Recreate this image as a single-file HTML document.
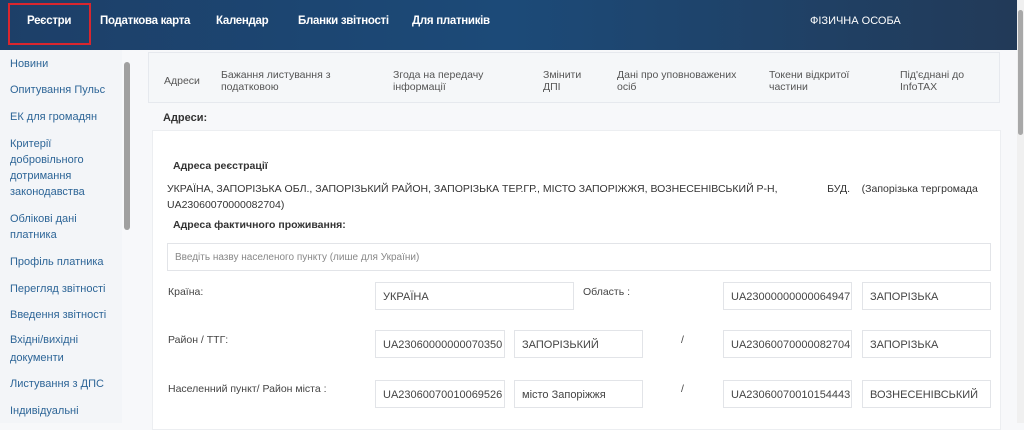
<!DOCTYPE html>
<html><head><meta charset="utf-8"><style>
*{margin:0;padding:0;box-sizing:border-box}
body{width:1024px;height:423px;overflow:hidden;background:#f7f8fa;font-family:"Liberation Sans","Noto Sans CJK SC",sans-serif;position:relative;font-size:11px;color:#333}
.a{position:absolute;white-space:nowrap}
.hdr{position:absolute;left:0;top:0;width:1017px;height:50px;background:linear-gradient(90deg,#1d3f68,#1c4a78 50%,#223a58)}
.nav{color:#fff;font-weight:bold;font-size:11.5px;top:15px;letter-spacing:-0.3px}
.side{position:absolute;left:0;top:50px;width:122px;height:373px;background:#f3f5f8}
.sl{color:#2d6597;font-size:11px;line-height:18px;left:10px}
.tabs{position:absolute;left:148px;top:52px;width:852px;height:51px;background:#f5f7f9;border:1px solid #e6e9ee}
.t{color:#555;font-size:10.5px;line-height:12px;top:17px}
.card{position:absolute;left:152px;top:130px;width:849px;height:300px;background:#fff;border:1px solid #eceef1}
.in{position:absolute;height:28px;border:1px solid #e2e4e8;background:#fff;color:#444;font-size:11px;padding:8px 0 0 7px;white-space:nowrap}
.lb{color:#444;font-size:10.5px}
</style></head><body>
<div class="hdr"></div>
<div class="a" style="left:8px;top:3px;width:83px;height:42px;border:2px solid #d9262e"></div>
<div class="a nav" style="left:27px">Реєстри</div>
<div class="a nav" style="left:100px">Податкова карта</div>
<div class="a nav" style="left:216px">Календар</div>
<div class="a nav" style="left:298px">Бланки звітності</div>
<div class="a nav" style="left:412px">Для платників</div>
<div class="a" style="left:810px;top:15px;color:#fff;font-size:11px">ФІЗИЧНА ОСОБА</div>
<div class="a" style="left:1017px;top:0;width:7px;height:423px;background:#f0f0f0"></div>
<div class="a" style="left:1018px;top:10px;width:5px;height:125px;background:#a8a8a8;border-radius:3px"></div>
<div class="side"></div>
<div class="a" style="left:124px;top:62px;width:6px;height:168px;background:#a0a0a0;border-radius:3px"></div>
<div class="a sl" style="top:55px">Новини</div>
<div class="a sl" style="top:81px">Опитування Пульс</div>
<div class="a sl" style="top:108px">ЕК для громадян</div>
<div class="a sl" style="top:136px;line-height:16px">Критерії<br>добровільного<br>дотримання<br>законодавства</div>
<div class="a sl" style="top:211px;line-height:16px">Облікові дані<br>платника</div>
<div class="a sl" style="top:253px">Профіль платника</div>
<div class="a sl" style="top:280px">Перегляд звітності</div>
<div class="a sl" style="top:306px">Введення звітності</div>
<div class="a sl" style="top:331px">Вхідні/вихідні<br>документи</div>
<div class="a sl" style="top:375px">Листування з ДПС</div>
<div class="a sl" style="top:402px">Індивідуальні</div>
<div class="tabs"></div>
<div class="a t" style="left:164px;top:75px">Адреси</div>
<div class="a t" style="left:221px;top:69px">Бажання листування з<br>податковою</div>
<div class="a t" style="left:393px;top:69px">Згода на передачу<br>інформації</div>
<div class="a t" style="left:543px;top:69px">Змінити<br>ДПІ</div>
<div class="a t" style="left:617px;top:69px">Дані про уповноважених<br>осіб</div>
<div class="a t" style="left:769px;top:69px">Токени відкритої<br>частини</div>
<div class="a t" style="left:900px;top:69px">Під'єднані до<br>InfoTAX</div>
<div class="a" style="left:163px;top:112px;font-weight:bold;font-size:11px;color:#333">Адреси:</div>
<div class="card"></div>
<div class="a" style="left:173px;top:160px;font-weight:bold;font-size:10.5px">Адреса реєстрації</div>
<div class="a" style="left:167px;top:181px;font-size:10.5px;line-height:16px;color:#333">УКРАЇНА, ЗАПОРІЗЬКА ОБЛ., ЗАПОРІЗЬКИЙ РАЙОН, ЗАПОРІЗЬКА ТЕР.ГР., МІСТО ЗАПОРІЖЖЯ, ВОЗНЕСЕНІВСЬКИЙ Р-Н, &nbsp; &nbsp; &nbsp; &nbsp; &nbsp; &nbsp; &nbsp; &nbsp; БУД. &nbsp; &nbsp;(Запорізька тергромада<br>UA23060070000082704)</div>
<div class="a" style="left:173px;top:219px;font-weight:bold;font-size:10.5px">Адреса фактичного проживання:</div>
<div class="in" style="left:167px;top:243px;width:824px;height:28px;color:#888;font-size:10px">Введіть назву населеного пункту (лише для України)</div>
<div class="a lb" style="left:168px;top:286px">Країна:</div>
<div class="a lb" style="left:583px;top:286px">Область :</div>
<div class="a lb" style="left:168px;top:334px">Район / ТТГ:</div>
<div class="a lb" style="left:168px;top:383px">Населенний пункт/ Район міста :</div>
<div class="a lb" style="left:681px;top:334px">/</div>
<div class="a lb" style="left:681px;top:383px">/</div>
<div class="in" style="left:375px;top:282px;width:199px">УКРАЇНА</div>
<div class="in" style="left:723px;top:282px;width:129px">UA23000000000064947</div>
<div class="in" style="left:862px;top:282px;width:129px">ЗАПОРІЗЬКА</div>
<div class="in" style="left:375px;top:330px;width:130px">UA23060000000070350</div>
<div class="in" style="left:514px;top:330px;width:129px">ЗАПОРІЗЬКИЙ</div>
<div class="in" style="left:723px;top:330px;width:129px">UA23060070000082704</div>
<div class="in" style="left:862px;top:330px;width:129px">ЗАПОРІЗЬКА</div>
<div class="in" style="left:375px;top:380px;width:130px">UA23060070010069526</div>
<div class="in" style="left:514px;top:380px;width:129px">місто Запоріжжя</div>
<div class="in" style="left:723px;top:380px;width:129px">UA23060070010154443</div>
<div class="in" style="left:862px;top:380px;width:129px">ВОЗНЕСЕНІВСЬКИЙ</div>
</body></html>
